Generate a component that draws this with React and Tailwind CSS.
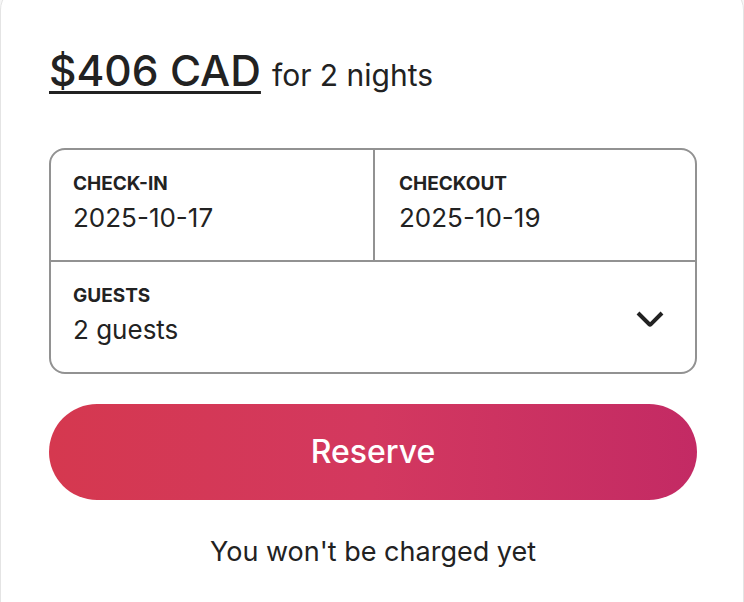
import React from "react";

function ChevronDown() {
  return (
    <svg viewBox="0 0 32 32" className="h-[32px] w-[32px]" fill="none" aria-hidden="true">
      <path d="M28 12 16.7 23.3a1 1 0 0 1-1.4 0L4 12" stroke="#222222" strokeWidth="4" strokeLinecap="butt" />
    </svg>
  );
}

export default function App() {
  return (
    <div className="h-[602px] overflow-hidden bg-[#f6f6f6] font-['Inter',sans-serif] text-[#222222]">
      <div className="-mt-[14px] h-[640px] rounded-[24px] border border-[#e4e4e4] bg-white pl-[48px] pr-[46px] pt-[58px]">
        <div className="flex h-[52px] items-baseline leading-[52px]">
          <span className="text-[42.5px] font-medium underline decoration-[3px] underline-offset-[5px]">$406 CAD</span>
          <span className="ml-[11px] text-[30px] font-normal">for 2 nights</span>
        </div>

        <div className="mt-[51px] rounded-[16px] border-2 border-[#929292]">
          <div className="grid h-[112px] grid-cols-2 border-b-2 border-[#929292]">
            <div className="pl-[22px] pt-[22px]">
              <div className="text-[19px] font-bold leading-[24px]">CHECK-IN</div>
              <div className="mt-[6px] text-[26px] leading-[32px]">2025-10-17</div>
            </div>
            <div className="border-l-2 border-[#929292] pl-[24px] pt-[22px]">
              <div className="text-[19px] font-bold leading-[24px]">CHECKOUT</div>
              <div className="mt-[6px] text-[26px] leading-[32px]">2025-10-19</div>
            </div>
          </div>
          <div className="flex h-[110px] items-center justify-between pl-[22px] pr-[29px]">
            <div className="self-start pt-[22px]">
              <div className="text-[19px] font-bold leading-[24px]">GUESTS</div>
              <div className="mt-[6px] text-[26px] leading-[32px]">2 guests</div>
            </div>
            <ChevronDown />
          </div>
        </div>

        <button className="mt-[30px] flex h-[96px] w-full items-center justify-center rounded-full bg-linear-to-r from-[#d5384f] via-[#d3385f] to-[#c32a64] text-[32px] font-medium text-white">
          Reserve
        </button>

        <div className="mt-[34px] text-center text-[27px] leading-[36px]">You won't be charged yet</div>
      </div>
    </div>
  );
}
